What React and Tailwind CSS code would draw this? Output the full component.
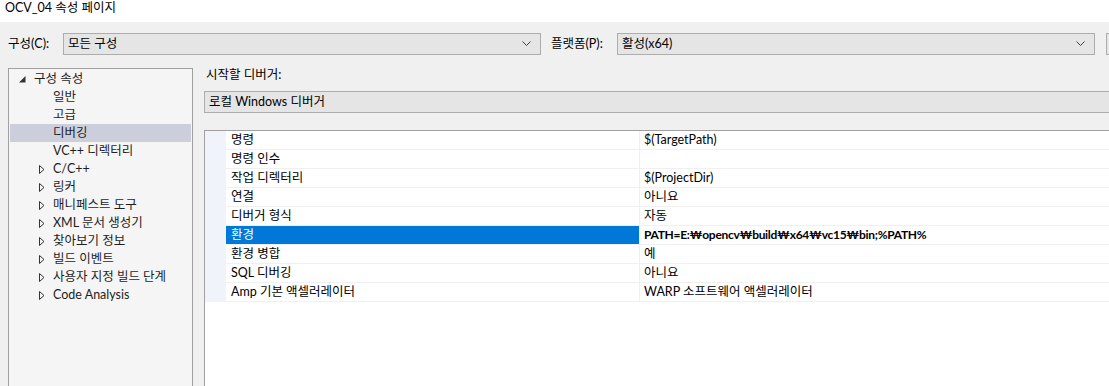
import React from "react";

const font = { fontFamily: 'Lato, "Noto Sans CJK KR", sans-serif' };

function Chevron() {
  return (
    <svg width="9" height="6" viewBox="0 0 9 6" className="shrink-0">
      <path d="M0.5 0.5 L4.5 4.5 L8.5 0.5" fill="none" stroke="#404040" strokeWidth="1" />
    </svg>
  );
}

function Combo({ text, className }) {
  return (
    <div className={"flex shrink-0 items-center h-[22px] border border-[#adadad] bg-[#e5e5e5] pl-[4px] pr-[9px] " + className}>
      <span className="flex-1 text-[12.5px] leading-[14px] text-black whitespace-nowrap">{text}</span>
      <Chevron />
    </div>
  );
}

function Collapsed() {
  return (
    <svg width="6" height="9" viewBox="0 0 6 9" className="shrink-0">
      <path d="M0.5 0.5 L5 4.5 L0.5 8.5 Z" fill="none" stroke="#333" strokeWidth="1" />
    </svg>
  );
}

function Expanded() {
  return (
    <svg width="7" height="7" viewBox="0 0 7 7" className="shrink-0">
      <path d="M6.5 0 L6.5 6.5 L0 6.5 Z" fill="#333" />
    </svg>
  );
}

const tree = [
  { t: "구성 속성", lvl: 0, icon: "exp" },
  { t: "일반", lvl: 1 },
  { t: "고급", lvl: 1 },
  { t: "디버깅", lvl: 1, sel: true },
  { t: "VC++ 디렉터리", lvl: 1 },
  { t: "C/C++", lvl: 1, icon: "col" },
  { t: "링커", lvl: 1, icon: "col" },
  { t: "매니페스트 도구", lvl: 1, icon: "col" },
  { t: "XML 문서 생성기", lvl: 1, icon: "col" },
  { t: "찾아보기 정보", lvl: 1, icon: "col" },
  { t: "빌드 이벤트", lvl: 1, icon: "col" },
  { t: "사용자 지정 빌드 단계", lvl: 1, icon: "col" },
  { t: "Code Analysis", lvl: 1, icon: "col" },
];

const rows = [
  ["명령", "$(TargetPath)"],
  ["명령 인수", ""],
  ["작업 디렉터리", "$(ProjectDir)"],
  ["연결", "아니요"],
  ["디버거 형식", "자동"],
  ["환경", "PATH=E:₩opencv₩build₩x64₩vc15₩bin;%PATH%", true],
  ["환경 병합", "예"],
  ["SQL 디버깅", "아니요"],
  ["Amp 기본 액셀러레이터", "WARP 소프트웨어 액셀러레이터"],
];

export default function App() {
  return (
    <div style={font} className="w-[1109px] h-[386px] overflow-hidden bg-[#f0f0f0] text-black flex flex-col">
      <div className="h-[22px] bg-white pl-[5px] text-[12.5px] leading-[15px] shrink-0">OCV_04 속성 페이지</div>
      <div className="flex items-center mt-[11px] h-[22px] shrink-0">
        <span className="w-[63px] shrink-0 pl-[8px] text-[12.5px] leading-[14px] whitespace-nowrap">구성(C):</span>
        <Combo text="모든 구성" className="w-[478px]" />
        <span className="w-[76px] shrink-0 pl-[10px] text-[12.5px] leading-[14px] whitespace-nowrap">플랫폼(P):</span>
        <Combo text="활성(x64)" className="w-[478px]" />
        <div className="ml-[11px] shrink-0 w-[20px] h-[22px] border border-[#adadad] bg-[#e5e5e5]" />
      </div>
      <div className="flex mt-[13px] flex-1 min-h-0">
        <div className="ml-[8px] w-[185px] shrink-0 border border-[#a0a0a0] bg-[#f5f5f5] pt-[1px] px-[1px] h-[340px]">
          {tree.map((it, i) => (
            <div key={i} className={"flex items-center h-[18px] " + (it.sel ? "bg-[#cccedb]" : "")}>
              <div className={"flex items-center justify-start w-[8px] shrink-0 " + (it.lvl === 0 ? "ml-[9px] mr-[7px]" : "ml-[29px] mr-[6px]")}>
                {it.icon === "exp" && <Expanded />}
                {it.icon === "col" && <Collapsed />}
              </div>
              <span className="text-[12.5px] leading-[14px] text-[#1e1e1e] whitespace-nowrap">{it.t}</span>
            </div>
          ))}
        </div>
        <div className="ml-[11px] flex-1 flex flex-col min-w-0">
          <div className="h-[14px] pl-[2px] text-[12.5px] leading-[14px] whitespace-nowrap">시작할 디버거:</div>
          <div className="mt-[9px] flex items-center h-[22px] border border-[#adadad] bg-[#e5e5e5] pl-[4px] w-[920px] shrink-0">
            <span className="text-[12.5px] leading-[14px] whitespace-nowrap">로컬 Windows 디버거</span>
          </div>
          <div className="mt-[17px] flex-1 border-l border-t border-[#a0a0a0] bg-white w-[920px] flex flex-col">
            {rows.map(([n, v, sel], i) => (
              <div key={i} className="flex h-[19px] shrink-0">
                <div className="w-[21px] shrink-0 bg-[#f0f4fa]" />
                <div className={"w-[414px] shrink-0 border-b border-r border-[#f0f0f0] flex items-center pl-[5px] " + (sel ? "bg-[#0078d7] text-white" : "")}>
                  <span className="text-[12.5px] leading-[14px] whitespace-nowrap">{n}</span>
                </div>
                <div className="flex-1 border-b border-[#f0f0f0] flex items-center pl-[4px]">
                  <span className={"leading-[14px] whitespace-nowrap " + (sel ? "font-bold text-[12px] tracking-[-0.3px]" : "text-[12.5px]")}>{v}</span>
                </div>
              </div>
            ))}
          </div>
        </div>
      </div>
    </div>
  );
}
